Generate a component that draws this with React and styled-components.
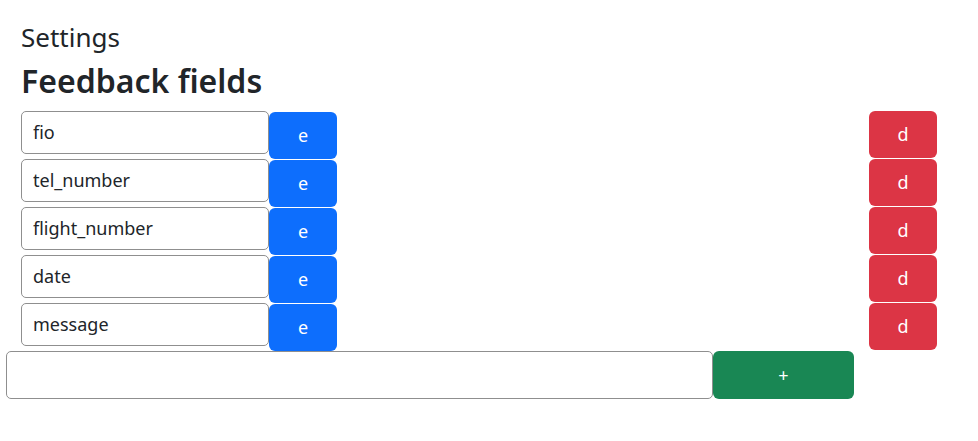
import React from "react";
import styled, { createGlobalStyle } from "styled-components";

const GlobalStyle = createGlobalStyle`
  body {
    margin: 0;
    background: #fff;
    font-family: "Noto Sans", "Open Sans", sans-serif;
    color: #212529;
  }
`;

const Page = styled.div`
  padding: 22px 6px 0;
  width: 978px;
  box-sizing: border-box;
`;

const Header = styled.div`
  padding-left: 15px;
`;

const Title = styled.h3`
  margin: 0 0 9px;
  font-size: 26px;
  font-weight: 400;
  line-height: 1.2;
`;

const Heading = styled.h1`
  margin: 0 0 10px;
  font-size: 32px;
  font-weight: 600;
  line-height: 1.2;
`;

const FieldList = styled.div`
  display: flex;
  flex-direction: column;
  padding-left: 15px;
  width: 916px;
`;

const Row = styled.div`
  display: flex;
  align-items: flex-start;
  height: 48px;
`;

const Input = styled.input`
  box-sizing: border-box;
  width: ${(p) => p.$width}px;
  height: ${(p) => p.$height}px;
  padding: 0 11px;
  border: 1px solid #8f8f8f;
  border-radius: 5px;
  font-family: inherit;
  font-size: 18px;
  color: #212529;
  background: #fff;
  outline: none;
`;

const Button = styled.button`
  box-sizing: border-box;
  width: ${(p) => p.$width}px;
  height: ${(p) => p.$height}px;
  margin-top: ${(p) => p.$offset || 0}px;
  margin-left: ${(p) => (p.$push ? "auto" : "0")};
  border: none;
  border-radius: 6px;
  background: ${(p) => p.$color};
  color: #fff;
  font-family: inherit;
  font-size: 18px;
  cursor: pointer;
  padding: 0;
`;

const AddRow = styled.div`
  display: flex;
`;

const fields = ["fio", "tel_number", "flight_number", "date", "message"];

export default function App() {
  return (
    <Page>
      <GlobalStyle />
      <Header>
        <Title>Settings</Title>
        <Heading>Feedback fields</Heading>
      </Header>
      <FieldList>
        {fields.map((f) => (
          <Row key={f}>
            <Input $width={248} $height={43} defaultValue={f} />
            <Button $width={68} $height={47} $offset={1} $color="#0d6efd">
              e
            </Button>
            <Button $width={68} $height={47} $push $color="#dc3545">
              d
            </Button>
          </Row>
        ))}
      </FieldList>
      <AddRow>
        <Input $width={707} $height={48} />
        <Button $width={141} $height={48} $color="#198754">
          +
        </Button>
      </AddRow>
    </Page>
  );
}
